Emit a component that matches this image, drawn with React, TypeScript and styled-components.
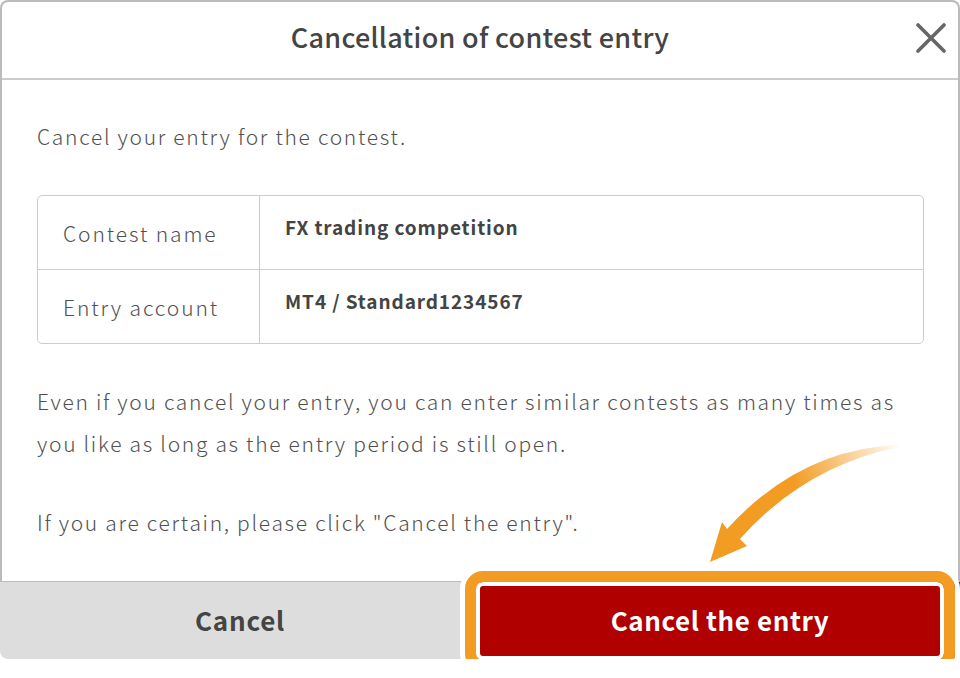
import styled, { createGlobalStyle } from "styled-components";

const GlobalStyle = createGlobalStyle`
  body {
    margin: 0;
    background: #fff;
    font-family: "Noto Sans CJK JP", "Noto Sans", sans-serif;
  }
`;

const rows = [
  { label: "Contest name", value: "FX trading competition" },
  { label: "Entry account", value: "MT4 / Standard1234567" },
];

export default function App() {
  return (
    <>
      <GlobalStyle />
      <Dialog>
        <Panel>
          <Header>
            <span />
            <Title>Cancellation of contest entry</Title>
            <CloseBtn aria-label="close">
              <svg width="30" height="30" viewBox="0 0 30 30">
                <path d="M2 2 L28 28 M28 2 L2 28" stroke="#666" strokeWidth="3.6" strokeLinecap="round" />
              </svg>
            </CloseBtn>
          </Header>
          <Body>
            <Text>Cancel your entry for the contest.</Text>
            <InfoTable>
              {rows.map((row) => (
                <InfoRow key={row.label}>
                  <InfoLabel>{row.label}</InfoLabel>
                  <InfoValue>{row.value}</InfoValue>
                </InfoRow>
              ))}
            </InfoTable>
            <Text $gap={36}>
              Even if you cancel your entry, you can enter similar contests as many times as you like as long as the
              entry period is still open.
            </Text>
            <Text $gap={37}>If you are certain, please click "Cancel the entry".</Text>
          </Body>
        </Panel>
        <Footer>
          <CancelBtn>Cancel</CancelBtn>
          <ConfirmCell>
            <ConfirmBtn>Cancel the entry</ConfirmBtn>
            <Highlight />
            <Arrow viewBox="0 0 210 130" width="210" height="130">
              <defs>
                <linearGradient id="arrowFade" gradientUnits="userSpaceOnUse" x1="198" y1="7" x2="95" y2="45">
                  <stop offset="0" stopColor="#f39c24" stopOpacity="0.05" />
                  <stop offset="1" stopColor="#f39c24" stopOpacity="1" />
                </linearGradient>
              </defs>
              <path
                d="M198 6 Q100 10 27 90 L22 83 L10 123 L47 107 L40 100 Q104 28 198 8 Z"
                fill="url(#arrowFade)"
              />
            </Arrow>
          </ConfirmCell>
        </Footer>
      </Dialog>
    </>
  );
}

const Dialog = styled.div`
  width: 960px;
  display: flex;
  flex-direction: column;
`;

const Panel = styled.div`
  border: 2px solid #bbb;
  border-bottom: none;
  border-radius: 8px 8px 0 0;
  background: #fff;
`;

const Header = styled.div`
  display: grid;
  grid-template-columns: 1fr auto 1fr;
  align-items: center;
  height: 76px;
  border-bottom: 2px solid #ccc;
`;

const Title = styled.h2`
  margin: 0 0 8px;
  font-size: 27px;
  font-weight: 500;
  color: #444;
  letter-spacing: 0.3px;
`;

const CloseBtn = styled.button`
  justify-self: end;
  margin: 0 12px 4px 0;
  padding: 0;
  border: none;
  background: none;
  display: flex;
  cursor: pointer;
`;

const Body = styled.div`
  padding: 35px 34px 38px 35px;
`;

const Text = styled.p<{ $gap?: number }>`
  margin: ${(p) => p.$gap ?? 0}px 0 0;
  font-size: 21px;
  font-weight: 300;
  line-height: 42px;
  color: #505050;
  letter-spacing: 1.7px;
`;

const InfoTable = styled.div`
  margin-top: 38px;
  border: 1px solid #ccc;
  border-radius: 5px;
`;

const InfoRow = styled.div`
  display: grid;
  grid-template-columns: 222px 1fr;
  height: 73px;

  & + & {
    border-top: 1px solid #ccc;
  }
`;

const InfoLabel = styled.div`
  display: flex;
  align-items: center;
  padding-left: 25px;
  border-right: 1px solid #ccc;
  font-size: 21px;
  font-weight: 300;
  color: #505050;
  letter-spacing: 1.9px;
`;

const InfoValue = styled.div`
  padding: 17px 0 0 25px;
  font-size: 19px;
  font-weight: 700;
  color: #444;
  letter-spacing: 0.9px;
`;

const Footer = styled.div`
  display: grid;
  grid-template-columns: 1fr 1fr;
  border-top: 1px solid #bbb;
`;

const CancelBtn = styled.button`
  height: 77px;
  padding: 0 0 2px;
  border: none;
  border-radius: 0 0 0 8px;
  background: #ddd;
  font-family: inherit;
  font-size: 26px;
  font-weight: 700;
  color: #444;
  letter-spacing: 0.8px;
  cursor: pointer;
`;

const ConfirmCell = styled.div`
  position: relative;
  display: flex;
`;

const ConfirmBtn = styled.button`
  flex: 1;
  height: 77px;
  padding: 0 0 2px;
  border: none;
  border-radius: 0 0 8px 0;
  background: #b00000;
  font-family: inherit;
  font-size: 26px;
  font-weight: 700;
  color: #fff;
  letter-spacing: 0.6px;
  cursor: pointer;
`;

/* orange call-out ring drawn over the confirm button */
const Highlight = styled.span`
  position: absolute;
  left: -15px;
  top: -11px;
  width: 490px;
  height: 100px;
  box-sizing: border-box;
  border: 11px solid #f39c24;
  border-radius: 18px;
  box-shadow: inset 0 0 0 4px #fff, 0 0 0 5px #fff;
  pointer-events: none;
`;

const Arrow = styled.svg`
  position: absolute;
  left: 220px;
  top: -143px;
  pointer-events: none;
`;
